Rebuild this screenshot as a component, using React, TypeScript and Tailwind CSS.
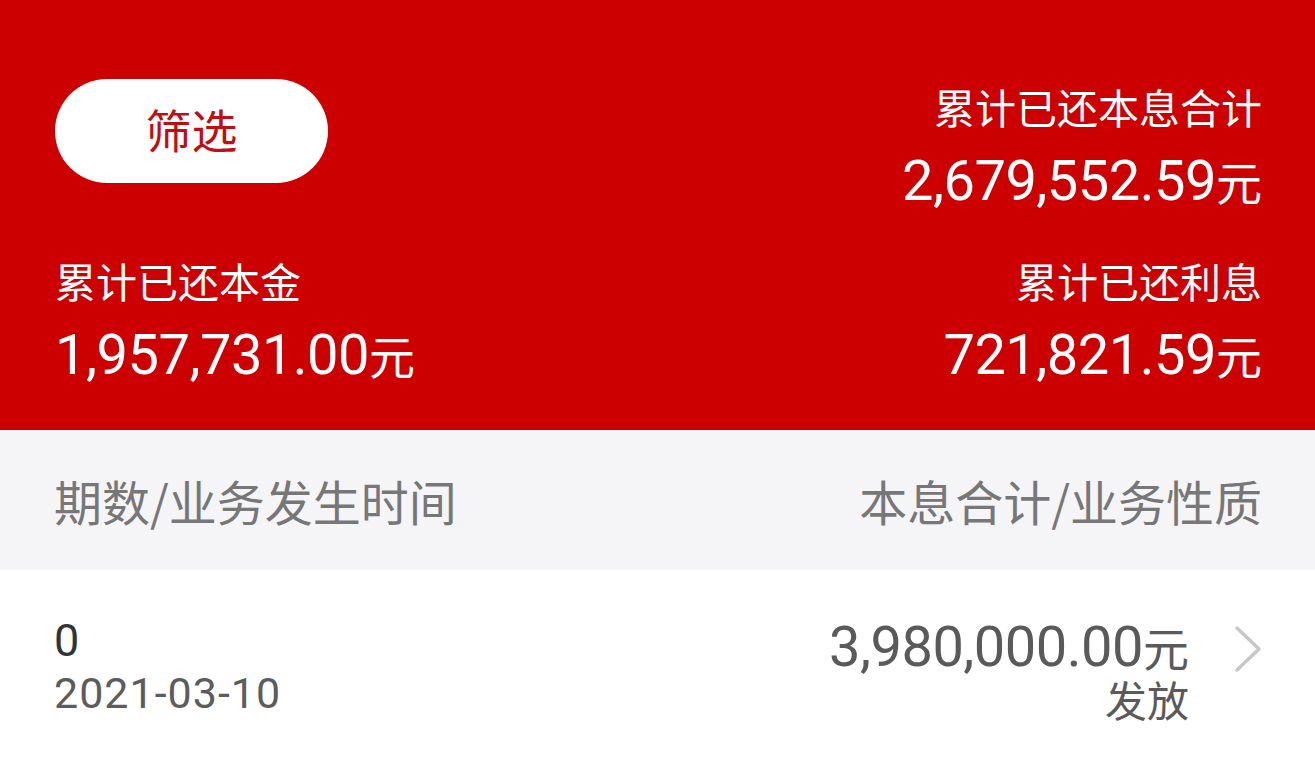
const cjk = "font-['Noto_Sans_CJK_SC',sans-serif]";
const num = "font-['Roboto','Noto_Sans_CJK_SC',sans-serif]";

function Amount({ value, className }: { value: string; className: string }) {
  return (
    <p className={`${num} text-[56px] tracking-[-0.5px] ${className}`}>
      {value}
      <span className={`${cjk} text-[46px] tracking-normal`}>元</span>
    </p>
  );
}

function Stat({ label, value, right }: { label: string; value: string; right?: boolean }) {
  return (
    <div className={right ? "text-right" : ""}>
      <p className={`${cjk} text-[41px] leading-[48px]`}>{label}</p>
      <Amount value={value} className="mt-[18px] leading-[64px]" />
    </div>
  );
}

export default function App() {
  return (
    <div className="min-h-screen bg-white">
      <section className="h-[430px] bg-[#cc0000] pl-[55px] pr-[53px] pt-[79px] text-white">
        <div className="flex items-start justify-between">
          <button
            className={`${cjk} h-[104px] w-[273px] rounded-full bg-white pb-[6px] text-[46px] leading-none text-[#c10e12]`}
          >
            筛选
          </button>
          <div className="mt-[3px]">
            <Stat label="累计已还本息合计" value="2,679,552.59" right />
          </div>
        </div>
        <div className="mt-[43px] flex items-start justify-between">
          <Stat label="累计已还本金" value="1,957,731.00" />
          <Stat label="累计已还利息" value="721,821.59" right />
        </div>
      </section>

      <div
        className={`${cjk} flex h-[140px] items-center justify-between bg-[#f5f5f7] pl-[54px] pr-[53px] text-[48px] text-[#777777]`}
      >
        <span>期数/业务发生时间</span>
        <span>本息合计/业务性质</span>
      </div>

      <div className="flex items-start justify-between pl-[54px] pr-[53px] pt-[45px]">
        <div>
          <p className={`${num} text-[45px] leading-[52px] text-[#333333]`}>0</p>
          <p className={`${num} text-[43px] leading-[52px] tracking-[1px] text-[#5c5c5c]`}>2021-03-10</p>
        </div>
        <div className="flex items-start">
          <div className="text-right text-[#5a5a5a]">
            <Amount value="3,980,000.00" className="mt-[3px] leading-[56px]" />
            <p className={`${cjk} text-[42px] leading-[48px]`}>发放</p>
          </div>
          <svg
            className="ml-[45px] mt-[10px] h-[48px] w-[28px]"
            viewBox="0 0 28 48"
            fill="none"
            stroke="#c8c8c8"
            strokeWidth="3.5"
            strokeLinecap="round"
            strokeLinejoin="round"
          >
            <polyline points="3,3 25,24 3,45" />
          </svg>
        </div>
      </div>
    </div>
  );
}
